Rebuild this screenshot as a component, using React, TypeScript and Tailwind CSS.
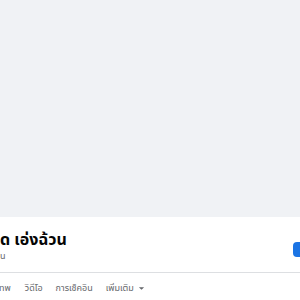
import React from "react";

const tabs = ["วิดีโอ", "การเช็คอิน"];

const App = () => {
  return (
    <div
      className="w-[300px] h-[300px] overflow-hidden bg-white flex flex-col"
      style={{ fontFamily: '"Noto Sans", "Noto Sans Thai", "DejaVu Sans", sans-serif' }}
    >
      <div className="h-[217px] bg-[#f0f2f5] shrink-0" />
      <div className="flex flex-col">
        <div className="flex items-start justify-between h-[56px] border-b border-[#dddfe2]">
          <div className="flex flex-col pt-[11px]">
            <h1 className="text-[16px] font-bold leading-[22px] text-[#050505] whitespace-nowrap">
              ด เอ่งฉ้วน
            </h1>
            <span className="text-[9px] leading-[12px] text-[#65676b]">น</span>
          </div>
          <div className="mt-[25px] w-[14px] h-[15px] rounded-[4px] bg-[#1b74e4] -mr-[7px]" />
        </div>
        <div className="flex items-center h-[30px] text-[9px] text-[#65676b] whitespace-nowrap">
          <span className="-ml-[1px]">ทพ</span>
          <div className="flex items-center gap-[13px] ml-[14px]">
            {tabs.map((t) => (
              <span key={t}>{t}</span>
            ))}
            <span className="flex items-center gap-[4px]">
              เพิ่มเติม
              <svg width="7" height="7" viewBox="0 0 8 8">
                <path d="M1 2.5 L4 5.5 L7 2.5 Z" fill="#65676b" />
              </svg>
            </span>
          </div>
        </div>
      </div>
    </div>
  );
};

export default App;
